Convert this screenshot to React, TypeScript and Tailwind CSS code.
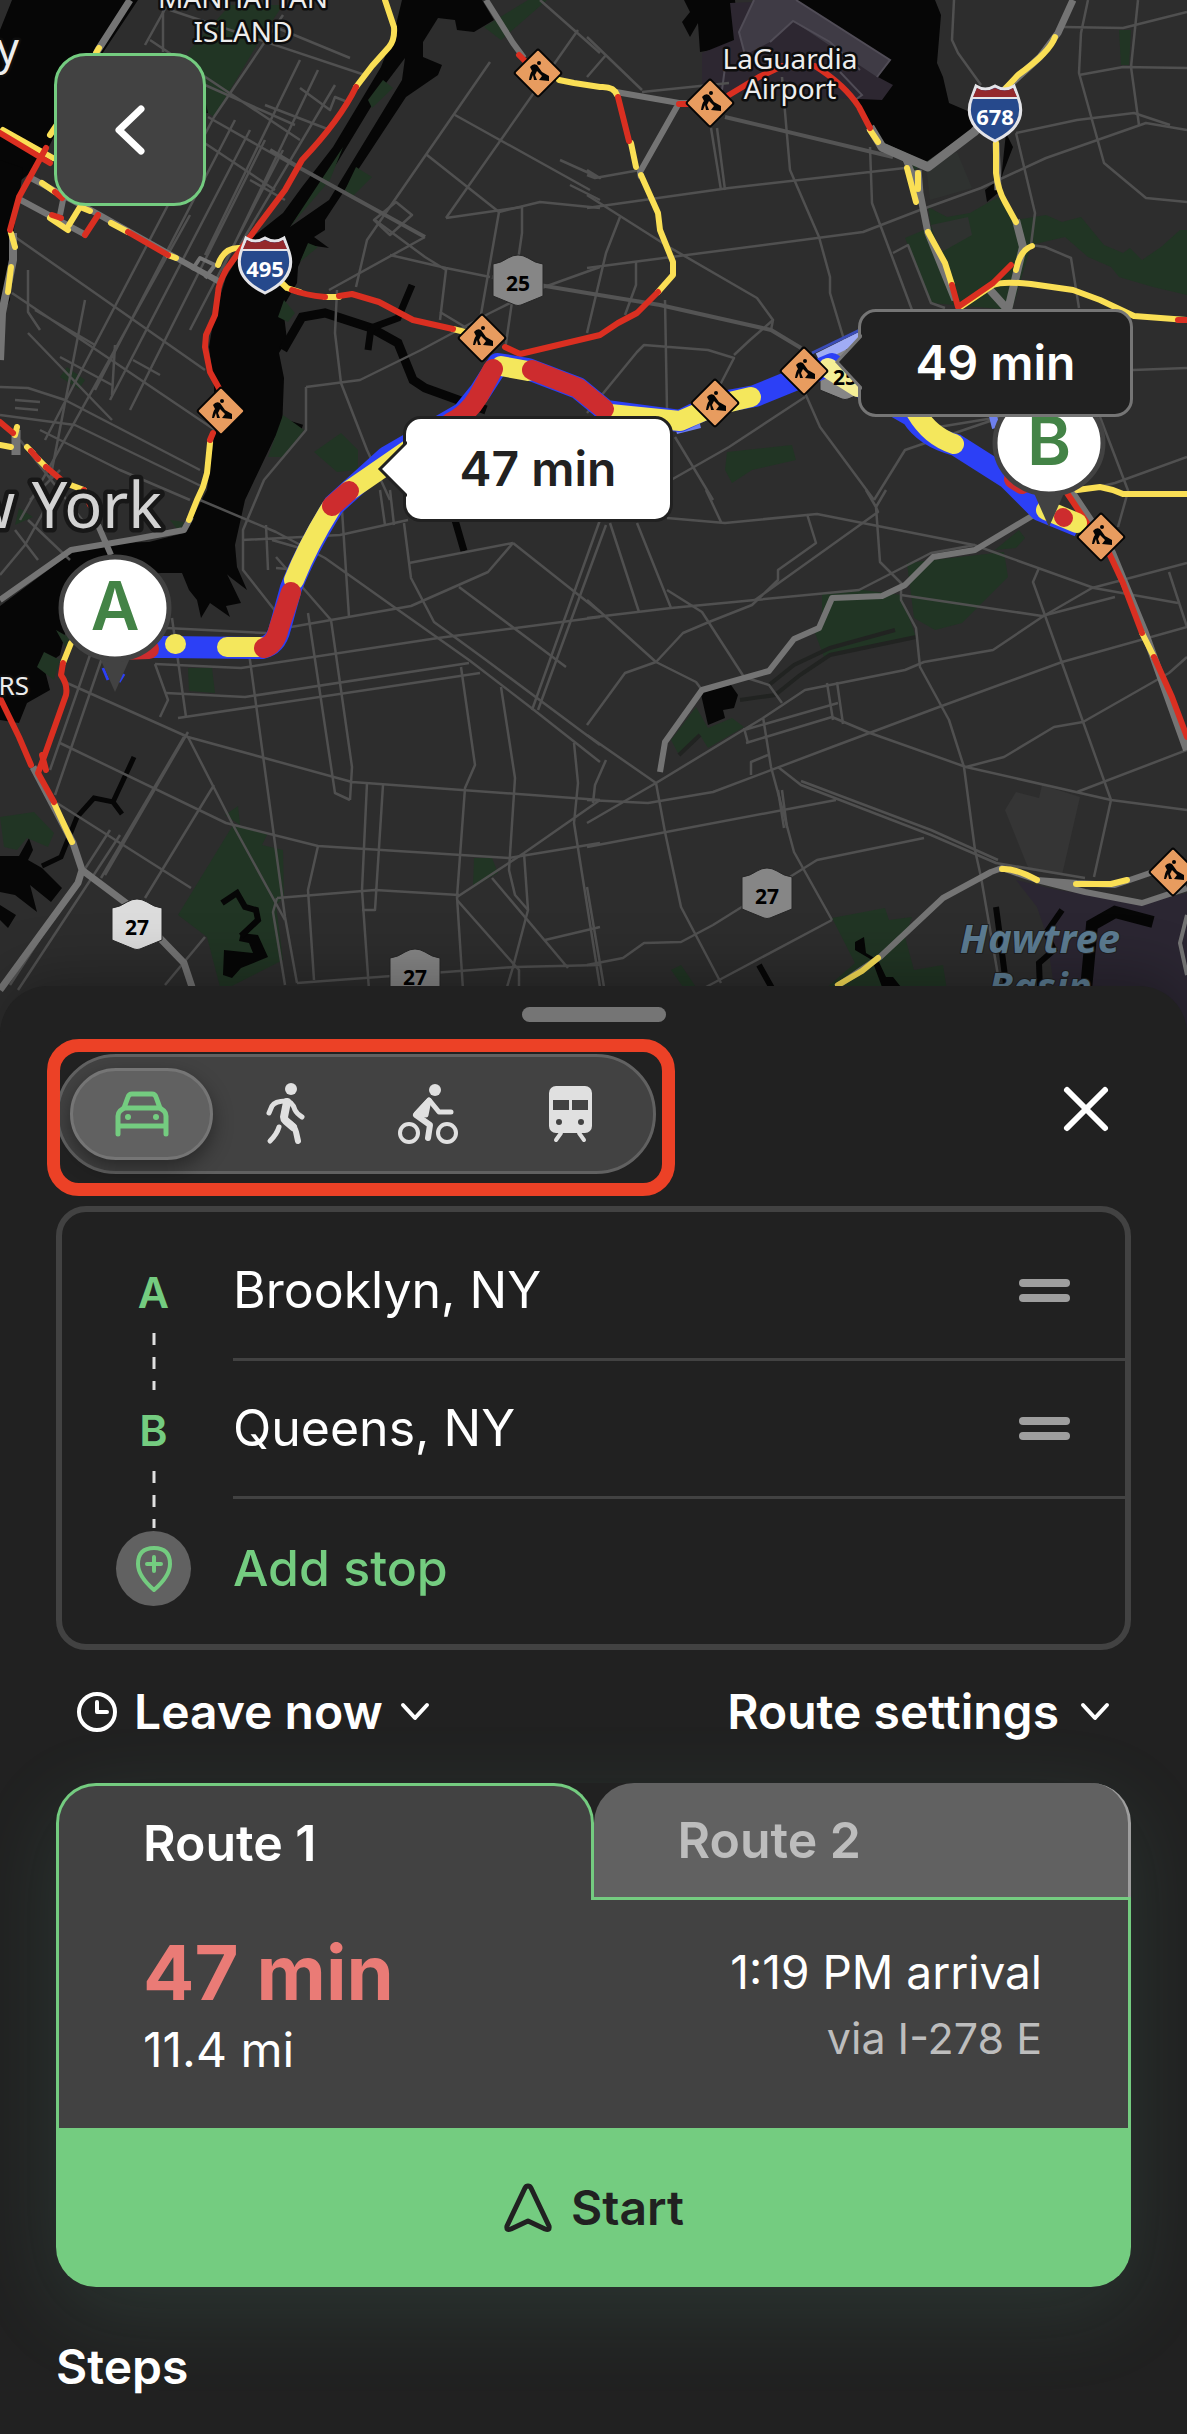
import { useState } from "react";
import type { ReactNode } from "react";

const water = [
  "M12 0 H138 L98 60 L62 120 L40 165 L15 185 L0 215 V30 Z",
  "M0 160 L23 168 L19 200 L12 240 L10 300 L0 320 Z",
  "M402 0 L394 33 L381 67 L333 147 L302 187 L283 213 L249 240 L226 277 L214 317 L209 347 L214 387 L214 437 L207 490 L184 533 L149 542 L111 543 L71 553 L0 606 V720 L19 723 L27 703 L50 690 L44 667 L60 655 L73 600 L90 580 L161 573 L182 573 L189 590 L197 600 L201 618 L210 603 L230 617 L226 606 L241 603 L226 572 L209 557 L230 577 L247 590 L237 567 L235 545 L245 500 L264 460 L275 437 L282 430 L284 378 L279 353 L287 340 L283 307 L297 283 L298 267 L308 245 L329 248 L314 237 L325 230 V220 L406 97 L438 75 L442 65 L423 57 V42 L438 18 L455 20 L457 30 L474 32 L494 20 L482 0 Z",
  "M684 0 L690 12 L682 22 L690 37 L698 23 L700 52 L740 45 L735 0 Z",
  "M790 0 H935 L941 15 L937 63 L943 77 L949 103 L970 112 L974 128 L926 162 L893 147 L878 140 L862 117 L850 98 Z",
  "M1006 133 L1013 147 L1003 173 L1001 180 Z M985 190 L995 182 L998 193 L987 202 Z",
  "M0 856 H19 L29 838 L33 850 L28 860 L42 868 L62 888 L51 902 L30 885 L37 912 L15 895 L0 892 Z M0 905 L16 915 L8 928 L0 920 Z",
];

const waterLines = [
  { d: "M283 350 L302 317 L325 313 L371 328 L398 343 L413 380 L425 388 L486 410", w: 9 },
  { d: "M371 328 L398 318 L412 285 M371 328 L368 350", w: 7 },
  { d: "M134 757 L113 802 L94 798 L77 817 L61 857 L42 866 M113 802 L122 814", w: 5 },
  { d: "M455 520 L464 551 M210 97 V113 M282 422 L302 428", w: 7 },
];

const parks = [
  "M187 53 L230 5 H283 L264 33 L214 117 L208 113 L200 77 Z",
  "M484 27 L528 0 H547 L501 40 Z",
  "M67 367 L85 380 L79 389 L60 377 Z",
  "M314 452 L341 433 L358 450 V470 L337 472 Z",
  "M283 415 L304 430 L283 457 H268 Z",
  "M284 300 L295 313 L288 322 L278 317 Z M308 243 L318 247 L300 262 Z",
  "M727 452 L792 445 L796 460 L752 470 L732 483 L725 470 Z",
  "M1119 30 H1131 L1129 65 H1121 Z",
  "M878 140 L893 147 L926 162 L937 155 L915 170 Z",
  "M928 207 L947 217 L970 213 L998 197 L1016 220 L1046 215 L1062 222 L1081 217 L1104 245 L1123 253 L1130 248 L1142 260 L1161 247 L1180 230 H1187 V295 L1153 287 L1119 277 L1111 267 L1088 257 L1065 237 L1031 245 L1012 310 L931 303 L905 238 L931 227 Z",
  "M188 668 H212 L215 693 L189 691 Z",
  "M233 825 L268 833 L262 845 L283 850 L284 897 L276 905 L283 960 L230 987 H220 L207 937 L178 915 Z M225 815 L238 806 L240 825 Z",
  "M474 858 H492 L498 873 L473 887 Z",
  "M0 817 L34 812 L54 833 L48 847 L27 838 L17 850 L4 847 Z",
  "M44 652 L60 660 L54 680 L37 667 Z M56 630 L70 638 L66 648 Z",
  "M19 508 L33 517 L15 525 Z M170 520 L184 522 L180 533 Z",
  "M907 563 L1004 552 L1008 577 L962 623 L935 630 L914 618 Z",
  "M1019 530 L1025 538 L1016 548 L995 550 Z",
  "M822 593 L863 590 L901 595 L916 637 L824 657 L815 633 L822 622 Z",
  "M696 707 L708 728 L732 718 L744 727 L708 748 L700 735 L679 755 L671 740 Z",
  "M832 918 L885 908 L889 920 L912 917 L905 937 L914 970 L943 965 L947 990 H824 L855 963 Z",
  "M671 970 L681 965 L696 987 H683 Z",
];

const ponds =
  "M224 950 L253 953 L249 943 L239 941 L241 933 L258 935 L268 957 L241 968 L232 978 L223 975 Z M700 690 L731 685 L738 695 L734 708 L723 710 L725 718 L708 725 Z M855 942 L864 937 L866 953 L878 960 L886 977 H893 L901 987 H882 L872 960 L855 950 Z";

const streets = [
  // Manhattan
  "M170 0 L145 45 M283 15 L214 117 M235 120 L95 390 M250 130 L110 400 M265 140 L130 410 M300 60 L205 255 M318 70 L222 270 M335 85 L240 245 M283 150 L190 330 M214 117 L45 440 M190 215 L20 520",
  "M163 0 V52 M150 40 L300 140 M170 10 L365 75 M270 25 L350 58 M265 105 L330 130 M208 117 L298 168 M200 140 L275 190 M205 85 L295 125 M300 88 L330 110 L335 97 L350 103",
  "M8 232 L205 370 M12 293 L215 430 M35 310 L95 345 M60 357 L112 385 M0 387 L28 388 L65 400 L200 470 M0 415 L75 425 L203 487 M15 400 L40 402 M15 408 L38 410",
  "M250 180 L285 200 M40 330 L28 312 V270 M28 333 L112 420 M20 440 L90 530 M40 430 L120 470 L190 500 M133 360 L160 375 M115 345 L112 395 M85 300 L50 480",
  "M50 500 L25 545 L0 575 M28 520 L70 560 M15 530 L38 560 M60 470 L30 500",
  // Queens, west
  "M540 0 L600 53 M578 30 L446 218 M427 155 L499 212 L540 202 L600 208 M455 115 L590 190 M490 62 L367 240 L356 287",
  "M446 218 L522 207 V233 L505 350 M390 255 L446 268 L490 277 M375 220 L425 257 L446 270 L440 320 M337 290 L335 333 L341 383 L367 450 L390 500",
  "M306 387 L360 380 L421 350 L490 313 L536 290 L600 267 M306 387 V430 L264 480 L243 530 V570 L276 612 M329 290 L425 237 M396 202 L412 215 L390 235 L374 220 Z M499 212 L480 320 M440 312 L470 330 M570 185 L600 200",
  "M587 37 L642 90 M606 55 L587 77 M642 92 L729 83 M782 77 L790 170 L819 237 L830 277 V293 L845 343 M711 128 L721 190 M717 128 L725 190",
  "M587 208 L729 188 L905 168 M587 268 L863 232 L920 210 L981 188 L1046 158 L1146 123 L1187 130 M587 195 L669 247 L757 298 L773 320 L771 330 M870 147 L872 203 L912 310",
  "M560 160 L600 178 L587 170 M587 175 L595 178 L640 170 M620 217 L606 253 L587 333 M665 300 L667 410 M587 413 L637 352 L644 345 L708 350 L734 358 L720 385 M734 355 L750 340 L773 320 M636 262 V285 L625 315",
  // Flushing
  "M954 0 L952 40 L958 53 L981 85 M1088 0 L1081 33 L1079 73 L1104 163 L1146 198 L1187 202 M1138 0 L1131 67 L1139 125 M1063 27 L1123 28 L1187 12 M1079 75 L1123 67 L1187 68",
  "M1016 133 L1077 120 L1134 113 L1170 125 M1016 133 L1035 213 L1031 245 L1045 247 L1071 258 L1079 308 M893 253 L908 245 L931 303 L945 308",
  // Middle Village
  "M805 393 L820 427 L874 500 M805 397 L729 447 L671 480 M675 437 L713 500 M874 500 L905 450 L993 420 M1100 417 L1129 493 M1187 457 L1115 483 L1077 492 M1133 370 L1187 368 M920 430 L1000 417",
  // Brooklyn
  "M166 628 L266 633 M155 664 L241 668 L438 638 L600 617 M166 693 L245 697 L469 663 M178 718 L480 673 M291 627 L411 606 L488 572 L513 543 M409 563 L513 543",
  "M200 500 L276 532 L325 558 L394 607 L469 660 L534 710 L600 762 M404 523 L411 578 L434 622 L486 660 L600 745 M459 587 L566 667 M513 543 L600 612 M342 510 L349 617 M380 490 L385 525 M390 490 L394 525",
  "M308 613 L335 793 L350 800 M276 557 L331 620 L352 767 L350 800 M249 653 L285 917 L297 983 M67 683 L188 737 L352 782 L600 800 M60 743 L226 823 L318 846 L509 858 L600 843 M57 803 L191 888",
  "M90 655 L50 770 M103 655 L55 795 M172 618 L186 717 M155 664 L168 700 L160 717 M184 737 L101 878 M188 732 L105 875 M214 785 L145 898 M188 737 L233 825 L285 920",
  "M367 783 L362 890 L369 990 M383 785 L375 910 H362 M277 898 L375 890 L459 895 M461 667 L475 765 L465 788 L457 897 L463 990 M501 687 L515 778 L509 870 L515 895 L528 910 L513 967 L507 987",
  "M574 743 L578 783 L574 823 L600 987 M457 897 L524 853 L600 800 M457 900 L519 970 V987 M492 878 L568 968 M297 983 L515 967 L600 965 M318 846 L308 890 L314 980 M545 940 L600 927 M524 853 L528 910",
  "M600 520 L532 710 M606 525 L538 710 M10 985 L110 830 M18 990 L120 835 M242 540 L340 535 L408 520 M268 570 L266 525 M276 568 L298 570 L300 548 L272 540 M205 937 L165 985 M277 898 L273 912 L285 985",
  // Ozone Park and east
  "M587 618 L671 608 L755 600 L859 590 L931 553 L975 545 M667 518 L725 523 L817 514 L974 545 L1094 588 L1178 603 M706 490 L721 522",
  "M807 514 L816 543 L778 570 V580 L752 605 L709 622 L683 633 L656 662 L625 673 L587 725 M866 490 L876 507 L880 562 L901 583 V600 L916 628 L920 667 L949 720 L964 767 L975 850 L981 877 L1000 987 M886 490 L876 507 L878 512 L755 600",
  "M901 595 L1042 616 L1115 597 M1039 568 L1033 582 L1062 663 L1111 800 L1094 877 M587 847 L836 800 M587 800 L648 803 L713 792 L832 747 L939 707 L1062 662 L1187 627",
  "M656 783 L763 718 L805 690 L905 670 L924 662 L993 650 L1042 617 L1092 588 L1187 563 M744 730 L838 703 M746 743 L832 717 L870 733 L966 767 L1111 800 L1187 810 M763 717 L771 767 L794 852 L832 920 M744 728 L748 743",
  "M778 767 L801 785 L931 835 L996 863 L1085 878 M801 781 L931 830 L998 860 M587 823 L656 783 L665 832 L681 907 L721 983 M587 965 L623 958 L644 943 L681 942 L713 925 L817 860 L924 838 M706 987 L832 920",
  "M587 600 L606 617 L656 662 L696 682 L702 690 M637 523 L671 608 M610 523 L639 612 M667 590 L702 612 L744 677 L769 685 L782 703 M587 735 L656 783 M966 767 L1004 757 L1054 727 L1083 722 L1169 673 L1187 657",
  "M1077 792 L1187 750 M1169 572 L1187 627 M587 887 L604 987 M827 683 L833 720 M837 682 L843 724 M778 790 L784 828 M782 790 L787 828 M1127 495 L1118 527 M606 760 L595 785 L593 803 M751 775 V762 L768 755",
];

const highways = [
  { d: "M130 0 L98 50 L60 130", w: 7 },
  { d: "M13 233 V260 L2 313 L0 360", w: 8 },
  { d: "M17 198 L86 235 M31 178 L96 213 L180 260 L220 282 M60 215 L64 195", w: 6 },
  { d: "M192 270 L200 258 L215 265 L205 278", w: 4 },
  { d: "M486 0 L513 43 L524 58", w: 6 },
  { d: "M616 92 L679 103 L710 103 M679 103 L640 172 L641 178", w: 6 },
  { d: "M870 127 L882 147 L928 167 L974 132 L996 110", w: 9 },
  { d: "M882 147 L905 157 L920 193 L928 233 L955 300 M918 170 L920 193", w: 7 },
  { d: "M1073 0 L1058 33 L1040 57 L1004 90 M996 143 L998 190", w: 7 },
  { d: "M1016 220 L1023 247 L1008 310 M990 290 L1008 310", w: 8 },
  { d: "M0 600 L71 550 L130 540 L184 530 L191 517 M98 525 L111 555", w: 6 },
  { d: "M16 430 V455", w: 9 },
  { d: "M33 767 L73 843 L82 870 L78 883 L0 990 M82 870 L126 903 L184 963 L193 990", w: 7 },
  { d: "M660 772 L665 742 L702 690 L769 671 L794 639 L819 628 L832 598 L882 596 L905 585 L933 557 L975 550 L1037 513", w: 6 },
  { d: "M836 987 L880 957 L943 898 L991 872 L1002 868 L1037 880 L1085 892 L1142 903 L1187 888 M1037 880 L1077 883 L1115 885 L1153 872", w: 6 },
  { d: "M1187 915 L1180 943 L1187 975", w: 4 },
  { d: "M1070 490 L1112 553 L1145 633 L1187 750", w: 8 },
];

const slowTraffic = [
  "M385 0 L394 27 Q395 40 389 47 L372 66 L356 87",
  "M210 443 L207 473 L203 487 L197 500 L189 520",
  "M218 265 Q224 247 240 248 L265 267 L287 288 L300 292 M325 297 H339 M453 329 L465 332",
  "M658 292 L673 275 V262 L660 230 L658 213 L641 175 M636 167 L631 143 M617 95 Q614 86 600 87 L574 83 L559 80",
  "M870 130 L878 142 M907 168 L916 202 M918 173 V189 M928 232 L945 263 L952 285",
  "M1016 270 Q1020 250 1032 246 M962 306 L993 285 Q1002 281 1031 284 L1073 290 L1100 300 L1134 316 L1187 320",
  "M1055 37 Q1050 52 1018 75 L1004 90 L993 113 M996 143 V173 Q998 190 1005 202 L1016 222",
  "M3 130 L53 158 M11 233 L15 247 M11 267 L8 292 M42 183 L55 192 M90 211 L80 207 L69 225 M50 218 L68 230 M111 223 L128 232 M168 255 L176 258 M99 48 L96 53 M50 135 L60 120",
  "M17 427 L15 435 M0 445 L11 447 M27 447 L33 453 M38 459 L46 467 M65 483 L84 490",
  "M71 643 L63 663 M54 803 L72 842",
  "M1142 633 L1154 657 M1077 490 L1100 487 Q1112 489 1123 494 H1187",
  "M838 985 L862 971 L878 958 M1002 869 Q1015 868 1037 880 M1076 884 H1111 L1127 880",
];

const heavyTraffic = [
  "M356 87 Q340 120 302 160 L285 190 L249 238 L226 270 Q218 285 218 293 L215 315 L206 335 L205 347 L210 372 L220 390 M213 433 L210 440",
  "M292 290 Q305 295 325 297 M339 296 L352 294 L379 302 L413 320 L453 329",
  "M505 347 L520 354 L600 335 L618 323 L637 313 L658 292 M629 141 L618 97 M519 55 L526 62",
  "M679 104 H690 M729 95 L759 77 L782 66 L815 66 Q845 85 859 107 L870 128",
  "M952 285 L958 307 L993 283 L1011 265 M1178 320 H1187",
  "M0 133 L50 163 M46 148 L19 197 L10 230 M55 192 L62 198 M52 215 L61 218 M98 215 L85 235 M128 232 L168 255",
  "M0 422 L13 433 M31 451 L38 459 M46 467 L65 483 M84 490 L90 505",
  "M0 698 L19 737 L31 765 M63 663 L61 675 Q68 685 66 695 L44 757 L38 773 L54 802 M42 755 L46 770",
  "M1067 493 L1087 523 L1109 553 L1123 583 L1142 633 M1154 657 L1172 697 L1187 737",
];

const mainRoute =
  "M120 647 L165 647 L262 648 Q276 645 280 628 L291 588 Q306 550 334 505 L387 457 L463 413 L480 392 L498 364 L528 369 L578 388 L606 411 L680 421 L717 403 L755 396 L804 376 L832 364 L858 385 L912 416 Q925 437 956 445 L1008 478 L1040 510 L1079 526";

const roadWorks = [
  [538, 73],
  [710, 103],
  [482, 338],
  [221, 411],
  [715, 403],
  [804, 371],
  [1101, 537],
  [1173, 872],
];

const interstates = [
  { x: 265, y: 265, label: "495" },
  { x: 995, y: 113, label: "678" },
];

const stateRoads = [
  { x: 518, y: 280, label: "25", fill: "#868686" },
  { x: 845, y: 374, label: "25", fill: "#868686" },
  { x: 137, y: 924, label: "27", fill: "#dcdcdc" },
  { x: 415, y: 974, label: "27", fill: "#868686" },
  { x: 767, y: 893, label: "27", fill: "#868686" },
];

function Pin({ x, y, letter }: { x: number; y: number; letter: string }) {
  return (
    <g transform={`translate(${x} ${y})`}>
      <path d="M-16 48 L0 84 L16 48 Z" fill="#424242" />
      <ellipse rx="54" ry="51" fill="#fff" stroke="#424242" strokeWidth="5" />
      <text y="22" textAnchor="middle" fontSize="67" fontWeight="600" fill="#438346">
        {letter}
      </text>
    </g>
  );
}

function CityMap() {
  return (
    <svg
      className="block w-full h-[1040px]"
      viewBox="0 0 1187 1040"
      preserveAspectRatio="xMinYMin slice"
      fill="none"
      fontFamily="Inter, sans-serif"
    >
      <rect width="1187" height="1040" fill="#2d2d2d" />
      {water.map((d) => (
        <path key={d} d={d} fill="#060606" />
      ))}
      <path d="M405 58 L402 80 L329 200 L290 227 L337 163 L383 87 Z" fill="#2d2d2d" />
      <path d="M383 80 L393 88 L372 108 L368 100 Z M356 167 L372 177 L352 197 L345 190 Z M343 147 L330 180 L300 215 L290 227 Z" fill="#213524" />
      {waterLines.map((line) => (
        <path key={line.d} d={line.d} stroke="#060606" strokeWidth={line.w} />
      ))}
      {/* LaGuardia and JFK */}
      <path d="M730 3 L796 0 L890 60 L878 77 L893 85 L882 100 L702 92 L702 53 L734 40 Z" fill="#2d2731" />
      <path d="M754 0 H796 L890 60 L877 77 L793 21 L770 42 L745 55 L739 32 Z" fill="#3f3b45" />
      <path d="M754 0 L739 32 L745 55 M770 42 L793 21 L830 42 L860 70 M796 0 L890 60 L877 77 M722 90 L726 60 M840 72 L862 95 L855 100" stroke="#504c56" strokeWidth="2" />
      <path d="M1016 880 L1058 890 L1142 903 L1187 893 V1040 H1062 L1046 933 L1037 907 Z" fill="#2b2632" />
      <path d="M1016 792 L1039 798 L1042 785 L1080 797 L1062 875 L1029 870 L1005 810 Z" fill="#353535" />
      {parks.map((d) => (
        <path key={d} d={d} fill="#213524" />
      ))}
      <path d="M926 165 L957 152 L972 188 L930 200 Z M931 225 L968 217 L972 235 L940 253 Z" fill="#2f3230" />
      <path d="M769 685 L794 665 L830 648 L895 630 M740 700 L775 695 L800 675 L830 655 L916 637 M679 755 L700 735" stroke="#212321" strokeWidth="4" />
      <path d={ponds} fill="#060606" />
      <path d="M222 903 L237 893 L245 907 L256 910 L258 920 L241 936" stroke="#060606" strokeWidth="6" />
      <path d="M996 907 L1000 937 L1008 1000 M1062 910 L1046 933 L1054 950 L1039 963 L1040 990 M759 965 L773 990" stroke="#060606" strokeWidth="6" />
      <path d="M1153 922 L1115 912 L1092 925 L1085 1000" stroke="#060606" strokeWidth="12" />

      <g stroke="#505050" strokeWidth="2.5" strokeLinejoin="round">
        {streets.map((d) => (
          <path key={d} d={d} />
        ))}
      </g>
      <path d="M300 168 L425 237 M270 150 L300 168 M492 277 L587 293 L660 305 L771 330 L801 348 M725 117 L893 157" stroke="#545454" strokeWidth="4" />
      {highways.map((road) => (
        <path key={road.d} d={road.d} stroke="#747474" strokeWidth={road.w} strokeLinejoin="round" />
      ))}
      <g strokeWidth="6" strokeLinecap="round" strokeLinejoin="round">
        {slowTraffic.map((d) => (
          <path key={d} d={d} stroke="#fadf55" />
        ))}
        {heavyTraffic.map((d) => (
          <path key={d} d={d} stroke="#da2f21" />
        ))}
      </g>

      {interstates.map((road) => (
        <g key={road.label} transform={`translate(${road.x} ${road.y})`}>
          <path
            d="M-19 -27 Q-10 -21 0 -27 Q10 -21 19 -27 L23 -16 Q34 12 0 28 Q-34 12 -23 -16 Z"
            fill="#26498c"
            stroke="#e4e4e8"
            strokeWidth="3"
          />
          <path d="M-18 -25 Q-10 -20 0 -25 Q10 -20 18 -25 L22 -16 H-22 Z" fill="#94292d" />
          <path d="M-23 -15 H23" stroke="#e4e4e8" strokeWidth="2" />
          <text y="12" textAnchor="middle" fontFamily="Noto Sans, sans-serif" fontWeight="700" fontSize="22" fill="#fff">
            {road.label}
          </text>
        </g>
      ))}
      {stateRoads.map((road) => (
        <path
          key={`${road.x}-${road.label}`}
          transform={`translate(${road.x} ${road.y})`}
          d="M-25 -16 Q-17 -17 -10 -22 Q0 -28 10 -22 Q17 -17 25 -16 V16 L3 25 Q0 26 -3 25 L-25 16 Z"
          fill={road.fill}
          stroke="#262626"
          strokeWidth="1"
        />
      ))}

      {/* Alternative route, mostly hidden by its label */}
      <path d="M818 358 L870 332" stroke="#a0acf5" strokeWidth="10" />
      <path d="M812 353 L868 326" stroke="#3a4cb8" strokeWidth="3" />
      <path d="M676 430 L700 424 M992 412 L996 428" stroke="#6e80ee" strokeWidth="8" />

      {/* Suggested route with its congestion */}
      <path d={mainRoute} stroke="#2c40f6" strokeWidth="22" strokeLinejoin="round" />
      <g strokeWidth="20" strokeLinecap="round" strokeLinejoin="round">
        <path d="M175 644 H176 M227 647 H260 M294 580 Q308 545 331 508 M350 490 L440 428 M501 366 L528 371 M610 414 L680 421 L717 405 L751 397 M916 412 Q930 436 954 444 M1046 510 L1077 523" stroke="#f4e75c" />
        <path d="M828 368 L858 387" stroke="#f4ee96" />
        <path d="M120 650 L149 649 M264 648 Q275 645 279 628 L291 592 M332 506 L349 491 M450 423 Q468 414 478 397 L493 369 M532 370 L578 388 L604 409 M1014 479 L1022 484" stroke="#cd2c2e" />
        <path d="M1063 517 L1064 518" stroke="#cd2c2e" strokeWidth="18" />
      </g>
      <path d="M103 668 L108 680 M124 674 L119 682" stroke="#2c40f6" strokeWidth="3" />

      <g textAnchor="middle" fontFamily="Noto Sans, sans-serif" fontWeight="700" fontSize="21" fill="#000">
        {stateRoads.map((road) => (
          <text key={`${road.x}-${road.label}`} x={road.x} y={road.y + 11}>
            {road.label}
          </text>
        ))}
      </g>

      {roadWorks.map(([x, y]) => (
        <g key={`${x}-${y}`} transform={`translate(${x} ${y})`}>
          <rect x="-17" y="-17" width="34" height="34" rx="2" transform="rotate(45)" fill="#e89c5f" stroke="#050505" strokeWidth="2" />
          <circle cx="1" cy="-10" r="2" fill="#050505" />
          <path d="M-8 -6 Q-5 -10 -1 -8 L4 -1 L11 3 V8 L1 7 L4 3 L-1 -2 L-3 2 L-1 7 H-4 L-5 2 L-7 7 H-9 Q-8 0 -6 -2 Z" fill="#050505" />
        </g>
      ))}

      <g fontFamily="Noto Sans, sans-serif" fill="#ededed" stroke="#0d0d0d" strokeWidth="5" strokeLinejoin="round" paintOrder="stroke">
        <text x="243" y="8" textAnchor="middle" fontSize="28">MANHATTAN</text>
        <text x="243" y="42" textAnchor="middle" fontSize="28">ISLAND</text>
        <text x="790" y="69" textAnchor="middle" fontSize="28">LaGuardia</text>
        <text x="790" y="99" textAnchor="middle" fontSize="28">Airport</text>
        <text x="19" y="64" textAnchor="end" fontSize="44">City</text>
        <text x="162" y="528" textAnchor="end" fontSize="63" fill="#d3d3d3" strokeWidth="9" stroke="#171717">New York</text>
        <text x="29" y="695" textAnchor="end" fontSize="26">RS</text>
        <g fill="#5c7c92" stroke="#202020" strokeWidth="2" fontStyle="italic" fontWeight="700" fontSize="40">
          <text x="1040" y="953" textAnchor="middle">Hawtree</text>
          <text x="1040" y="1001" textAnchor="middle">Basin</text>
        </g>
      </g>

      <Pin x={115} y={608} letter="A" />
      <Pin x={1049} y={443} letter="B" />
    </svg>
  );
}

function CarIcon() {
  return (
    <svg width="64" height="64" viewBox="0 0 64 64" fill="none" stroke="currentColor" strokeWidth="5" strokeLinejoin="round" strokeLinecap="round">
      <path d="M14 26 L18 15 Q19 12 22 12 H42 Q45 12 46 15 L50 26 Z" />
      <path d="M8 52 V34 Q8 31 10 29 L14 26 M50 26 L54 29 Q56 31 56 34 V52 M8 44 H56" />
      <circle cx="18" cy="35" r="3" fill="currentColor" stroke="none" />
      <circle cx="46" cy="35" r="3" fill="currentColor" stroke="none" />
    </svg>
  );
}

function WalkIcon() {
  return (
    <svg width="64" height="64" viewBox="0 0 64 64" fill="none" stroke="currentColor" strokeWidth="6" strokeLinecap="round" strokeLinejoin="round">
      <circle cx="38" cy="7" r="6" fill="currentColor" stroke="none" />
      <path d="M16 31 L19 24 Q22 19 33 19 Q39 19 42 28 Q44 32 49 35" strokeWidth="5" />
      <path d="M34 20 L31 35 Q31 37 33 39 L40 45" strokeWidth="8" />
      <path d="M35 40 Q42 45 43 50 L45 59" />
      <path d="M26 45 Q24 52 17 59" strokeWidth="5" />
    </svg>
  );
}

function BikeIcon() {
  return (
    <svg width="64" height="64" viewBox="0 0 64 64" fill="none" stroke="currentColor" strokeLinecap="round" strokeLinejoin="round">
      <circle cx="39" cy="8" r="6" fill="currentColor" stroke="none" />
      <circle cx="13" cy="51" r="9" strokeWidth="4" />
      <circle cx="51" cy="51" r="9" strokeWidth="4" />
      <path d="M33 19 L20 33 L34 43 L32 56" strokeWidth="6" />
      <path d="M33 18 L30 33 L20 32 Z" strokeWidth="5" fill="currentColor" />
      <path d="M34 19 L43 30 H55" strokeWidth="5" />
    </svg>
  );
}

function TrainIcon() {
  return (
    <svg width="64" height="64" viewBox="0 0 64 64" fill="none">
      <rect x="10" y="4" width="43" height="47" rx="7" fill="currentColor" />
      <path d="M14 18 H30 V28 H14 Z M33 18 H49 V28 H33 Z" fill="#424242" />
      <circle cx="20" cy="40" r="3" fill="#424242" />
      <circle cx="42" cy="40" r="3" fill="#424242" />
      <path d="M22 51 L17 58 M40 51 L45 58" stroke="currentColor" strokeWidth="4" strokeLinecap="round" />
    </svg>
  );
}

function ChevronDown() {
  return (
    <svg width="32" height="24" viewBox="0 0 32 24" fill="none" stroke="currentColor" strokeWidth="4" strokeLinecap="round" strokeLinejoin="round">
      <path d="M4 5 L16 18 L28 5" />
    </svg>
  );
}

function Dashes() {
  return (
    <svg width="4" height="57" viewBox="0 0 4 57">
      <path d="M2 0 V57" stroke="#e0e0e0" strokeWidth="3" strokeDasharray="12 12" />
    </svg>
  );
}

const modes: { id: string; label: string; icon: ReactNode }[] = [
  { id: "car", label: "Drive", icon: <CarIcon /> },
  { id: "walk", label: "Walk", icon: <WalkIcon /> },
  { id: "bike", label: "Bike", icon: <BikeIcon /> },
  { id: "transit", label: "Transit", icon: <TrainIcon /> },
];

const stops = ["Brooklyn, NY", "Queens, NY"];

export default function App() {
  const [mode, setMode] = useState("car");

  return (
    <main className="w-full bg-[#212121] text-white overflow-hidden font-[Inter,sans-serif]">
      <section className="relative">
        <CityMap />
        <button
          aria-label="Back"
          className="absolute left-[54px] top-[53px] w-[152px] h-[153px] rounded-[32px] bg-[#424242] border-[3px] border-[#74cc80] flex items-center justify-center"
        >
          <svg width="40" height="60" viewBox="0 0 40 60" fill="none" stroke="currentColor" strokeWidth="7" strokeLinecap="round" strokeLinejoin="round">
            <path d="M31 9 L9 30 L31 51" />
          </svg>
        </button>
        <button className="absolute left-[403px] top-[416px] w-[270px] h-[106px] rounded-[18px] bg-white border-[3px] border-[#212121] text-[#212121] text-[48px] font-semibold">
          <svg className="absolute -left-[30px] top-[22px]" width="31" height="56" viewBox="0 0 31 56">
            <path d="M31 1 L4 28 L31 55" fill="#fff" stroke="#212121" strokeWidth="3" />
          </svg>
          47 min
        </button>
        <button className="absolute left-[858px] top-[309px] w-[275px] h-[108px] rounded-[18px] bg-[#212121] border-[3px] border-[#757575] text-[48px] font-semibold">
          <svg className="absolute -left-[28px] top-[22px]" width="29" height="56" viewBox="0 0 29 56">
            <path d="M29 1 L4 28 L29 55" fill="#212121" stroke="#757575" strokeWidth="3" />
          </svg>
          49 min
        </button>
      </section>

      <section className="relative -mt-[54px] rounded-t-[48px] bg-[#212121] px-14 pt-[21px] pb-10 shadow-[0_-10px_60px_rgba(0,0,0,0.3)]">
        <div className="w-36 h-[15px] rounded-[8px] bg-[#757575] mx-auto" />

        <div className="flex items-center justify-between mt-8 pr-5">
          <div className="relative">
            <div className="w-[600px] h-[120px] rounded-full bg-[#424242] border-[3px] border-[#616161] p-[11px] grid grid-cols-4">
              {modes.map((item) => (
                <button
                  key={item.id}
                  aria-label={item.label}
                  aria-pressed={mode === item.id}
                  onClick={() => setMode(item.id)}
                  className={
                    mode === item.id
                      ? "flex items-center justify-center rounded-full bg-[#616161] border-[3px] border-[#757575] text-[#74cc80] shadow-[0_8px_20px_rgba(0,0,0,0.4)]"
                      : "flex items-center justify-center text-[#e0e0e0]"
                  }
                >
                  {item.icon}
                </button>
              ))}
            </div>
            <div className="absolute -left-[9px] -right-[19px] -top-[15px] -bottom-[22px] rounded-[32px] border-[13px] border-[#ec4126] pointer-events-none" />
          </div>
          <button aria-label="Close" className="pb-[10px]">
            <svg width="50" height="50" viewBox="0 0 50 50" fill="none" stroke="currentColor" strokeWidth="6" strokeLinecap="round">
              <path d="M6 6 L44 44 M44 6 L6 44" />
            </svg>
          </button>
        </div>

        <div className="mt-8 flex rounded-[30px] border-[6px] border-[#424242] text-[50px]">
          <div className="w-[171px] pl-3 pt-10 flex flex-col items-center text-[43px] font-semibold text-[#74cc80]">
            <span className="h-[81px] flex items-center">A</span>
            <Dashes />
            <span className="h-[81px] flex items-center">B</span>
            <Dashes />
            <span className="mt-[3px] size-[75px] rounded-full bg-[#616161] flex items-center justify-center">
              <svg width="40" height="50" viewBox="0 0 40 50" fill="none" stroke="currentColor" strokeWidth="4" strokeLinecap="round" strokeLinejoin="round">
                <path d="M20 46 Q4 32 4 20 Q4 4 20 4 Q36 4 36 20 Q36 32 20 46 Z M20 13 V27 M13 20 H27" />
              </svg>
            </span>
          </div>
          <div className="flex-1 pt-[11px] pb-[7px]">
            {stops.map((stop) => (
              <div key={stop} className="h-[138px] border-b-[3px] border-[#424242] flex items-center justify-between pr-[55px]">
                <span>{stop}</span>
                <button aria-label={`Reorder ${stop}`} className="flex flex-col gap-[7px]">
                  <span className="w-[51px] h-2 rounded-full bg-[#9e9e9e]" />
                  <span className="w-[51px] h-2 rounded-full bg-[#9e9e9e]" />
                </button>
              </div>
            ))}
            <div className="h-[138px] flex items-center">
              <button className="font-medium text-[#74cc80]">Add stop</button>
            </div>
          </div>
        </div>

        <div className="h-[133px] px-5 pb-[10px] flex items-center justify-between text-[48px] font-semibold">
          <button className="flex items-center gap-4">
            <svg width="42" height="42" viewBox="0 0 42 42" fill="none" stroke="currentColor" strokeWidth="4" strokeLinecap="round" strokeLinejoin="round">
              <circle cx="21" cy="21" r="18" />
              <path d="M21 11 V21 H31" />
            </svg>
            Leave now
            <ChevronDown />
          </button>
          <button className="flex items-center gap-5">
            Route settings
            <ChevronDown />
          </button>
        </div>

        <div className="rounded-[40px] shadow-[0_24px_90px_rgba(116,204,170,0.12)]">
          <div className="grid grid-cols-2 h-[117px] text-[50px] font-semibold">
            <button className="relative z-10 pl-[84px] text-left rounded-t-[40px] bg-[#424242] border-[3px] border-b-0 border-[#74cc80]">
              Route 1
            </button>
            <div className="border-b-[3px] border-[#74cc80] bg-linear-to-b from-transparent from-50% to-[#616161] to-50%">
              <button className="w-full h-full pl-[84px] text-left text-[#bdbdbd] rounded-t-[40px] bg-[#616161] border-r-[3px] border-[#9e9e9e]">
                Route 2
              </button>
            </div>
          </div>
          <div className="h-[228px] flex justify-between bg-[#424242] border-x-[3px] border-[#74cc80] pl-[84px] pr-[86px] pt-8">
            <div className="flex flex-col">
              <strong className="text-[76px] leading-[80px] font-bold text-[#ea7b76]">47 min</strong>
              <span className="text-[48px] leading-[76px]">11.4 mi</span>
            </div>
            <div className="flex flex-col text-right pt-1">
              <span className="text-[46px] leading-[72px]">1:19 PM arrival</span>
              <span className="text-[43px] leading-[60px] text-[#bdbdbd]">via I-278 E</span>
            </div>
          </div>
          <button className="w-full h-[159px] rounded-b-[40px] bg-[#74cc80] text-[#212121] text-[48px] font-semibold flex items-center justify-center gap-[18px]">
            <svg width="50" height="52" viewBox="0 0 50 52" fill="none" stroke="currentColor" strokeWidth="5" strokeLinejoin="round">
              <path d="M25 4 Q27 4 28 6 L46 44 Q47 49 42 47 L25 39 L8 47 Q3 49 4 44 L22 6 Q23 4 25 4 Z" />
            </svg>
            Start
          </button>
        </div>

        <h2 className="mt-[50px] text-[48px] leading-[60px] font-semibold">Steps</h2>
      </section>
    </main>
  );
}
